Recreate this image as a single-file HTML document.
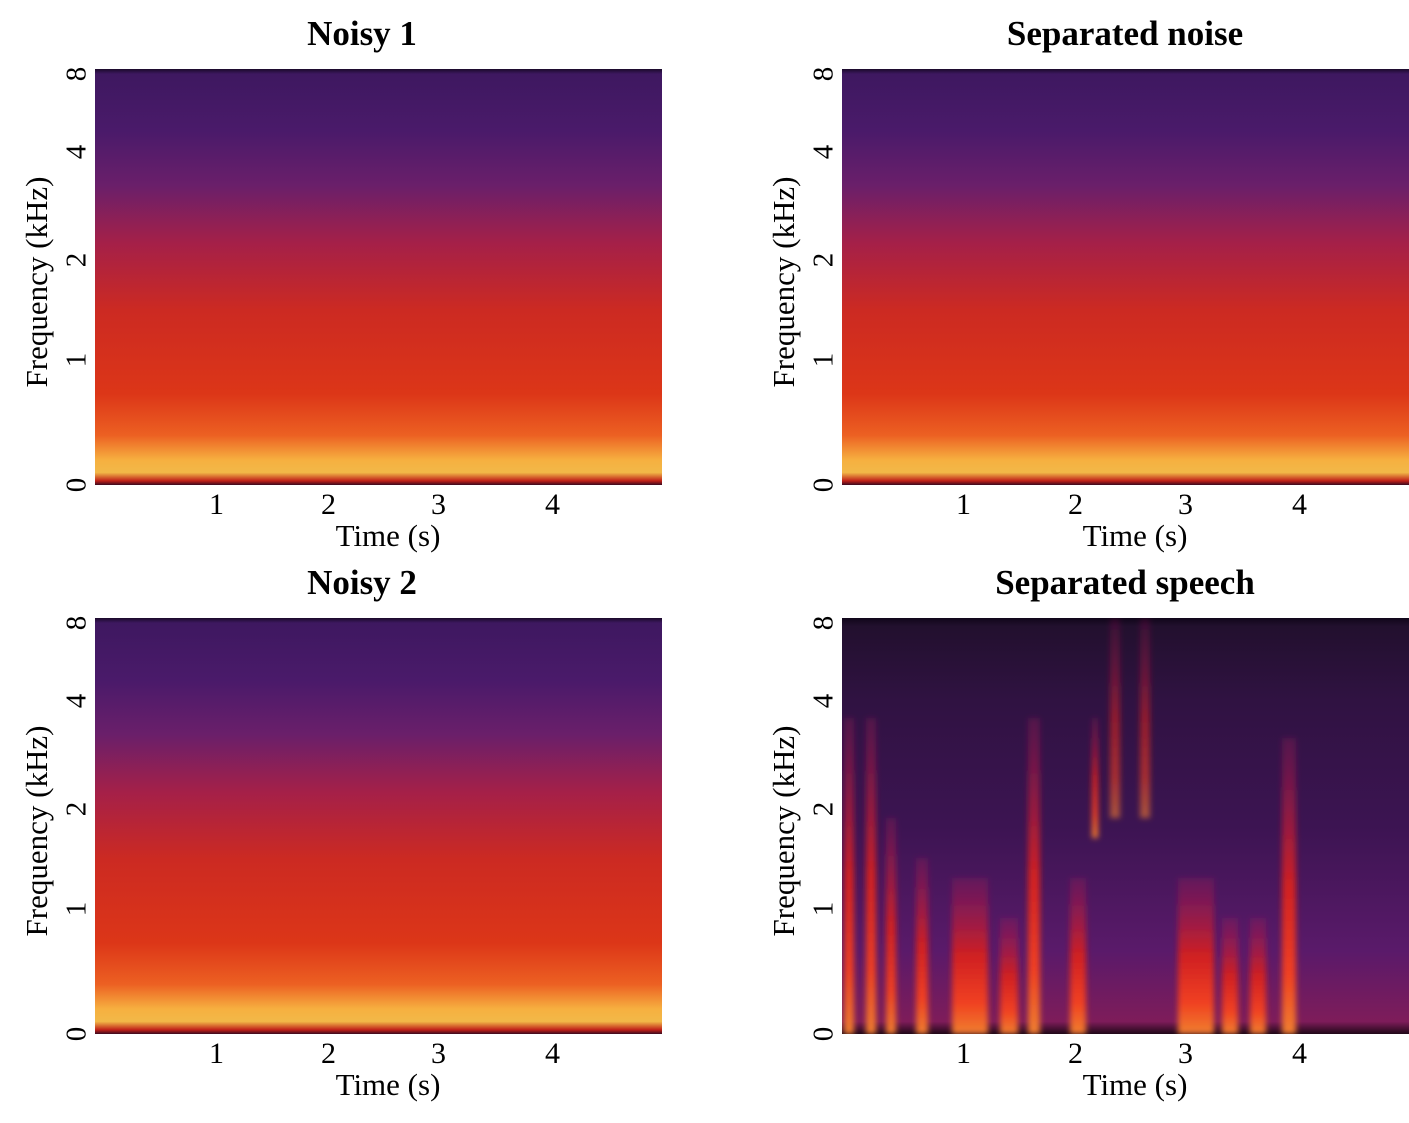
<!DOCTYPE html>
<html><head><meta charset="utf-8"><style>
body{margin:0;width:1409px;height:1123px;background:#fff;position:relative;overflow:hidden;font-family:"Liberation Serif",serif;color:#000}
.t{position:absolute;font-weight:bold;font-size:35px;transform:translateX(-50%);white-space:nowrap}
.l{position:absolute;font-size:30px;white-space:nowrap}
.c{position:absolute;font-size:31px;white-space:nowrap;transform:translateX(-50%)}
.r{position:absolute;font-size:31px;white-space:nowrap;transform:translate(-50%,-50%) rotate(-90deg)}
.n{position:absolute;font-size:29px;white-space:nowrap;transform:translate(-50%,-50%) rotate(-90deg)}
svg{position:absolute}
</style></head><body>
<svg width="0" height="0"><defs>
<linearGradient id="gn" x1="0" y1="0" x2="0" y2="1">
<stop offset="0" stop-color="#1a0a2a"/><stop offset="0.012" stop-color="#3e1860"/><stop offset="0.15" stop-color="#4a1a6a"/><stop offset="0.28" stop-color="#6a1f6a"/><stop offset="0.42" stop-color="#a52048"/><stop offset="0.58" stop-color="#cc2a22"/><stop offset="0.78" stop-color="#dc3618"/><stop offset="0.88" stop-color="#ec6022"/><stop offset="0.94" stop-color="#f6b040"/><stop offset="0.97" stop-color="#f2b848"/><stop offset="0.99" stop-color="#c02018"/><stop offset="1" stop-color="#3a0a20"/>
</linearGradient>
<linearGradient id="gs" x1="0" y1="0" x2="0" y2="1">
<stop offset="0" stop-color="#10061a"/><stop offset="0.02" stop-color="#22102e"/><stop offset="0.2" stop-color="#301242"/><stop offset="0.5" stop-color="#3c1452"/><stop offset="0.8" stop-color="#5a1a6a"/><stop offset="0.97" stop-color="#7e1c5a"/><stop offset="1" stop-color="#200818"/>
</linearGradient>
<linearGradient id="st" x1="0" y1="0" x2="0" y2="1">
<stop offset="0" stop-color="#a01858" stop-opacity="0.3"/><stop offset="0.5" stop-color="#d02020"/><stop offset="0.8" stop-color="#f04020"/><stop offset="1" stop-color="#f08030"/>
</linearGradient>
<filter id="bl"><feGaussianBlur stdDeviation="3"/></filter>
</defs></svg>

<div class="t" style="left:362px;top:14px">Noisy 1</div>
<div class="t" style="left:1125px;top:14px">Separated noise</div>
<div class="t" style="left:362px;top:563px">Noisy 2</div>
<div class="t" style="left:1125px;top:563px">Separated speech</div>

<svg style="left:95px;top:69px" width="567" height="416"><rect width="567" height="416" fill="url(#gn)"/></svg>
<svg style="left:842px;top:69px" width="567" height="416"><rect width="567" height="416" fill="url(#gn)"/></svg>
<svg style="left:95px;top:618px" width="567" height="416"><rect width="567" height="416" fill="url(#gn)"/></svg>
<svg style="left:842px;top:618px" width="567" height="416"><rect width="567" height="416" fill="url(#gs)"/>
<g filter="url(#bl)">
<rect x="2" y="100" width="10" height="316" fill="url(#st)"/>
<rect x="24" y="100" width="10" height="316" fill="url(#st)"/>
<rect x="44" y="200" width="10" height="216" fill="url(#st)"/>
<rect x="74" y="240" width="12" height="176" fill="url(#st)"/>
<rect x="110" y="260" width="36" height="156" fill="url(#st)"/>
<rect x="158" y="300" width="18" height="116" fill="url(#st)"/>
<rect x="186" y="100" width="12" height="316" fill="url(#st)"/>
<rect x="228" y="260" width="16" height="156" fill="url(#st)"/>
<rect x="250" y="100" width="6" height="120" fill="url(#st)"/>
<rect x="268" y="0" width="10" height="200" fill="url(#st)" opacity="0.6"/>
<rect x="298" y="0" width="10" height="200" fill="url(#st)" opacity="0.6"/>
<rect x="336" y="260" width="36" height="156" fill="url(#st)"/>
<rect x="380" y="300" width="16" height="116" fill="url(#st)"/>
<rect x="408" y="300" width="16" height="116" fill="url(#st)"/>
<rect x="440" y="120" width="14" height="296" fill="url(#st)"/>
</g></svg>

<div class="r" style="left:37px;top:282px">Frequency (kHz)</div>
<div class="r" style="left:784px;top:282px">Frequency (kHz)</div>
<div class="r" style="left:37px;top:831px">Frequency (kHz)</div>
<div class="r" style="left:784px;top:831px">Frequency (kHz)</div>

<div class="n" style="left:77px;top:74px">8</div><div class="n" style="left:77px;top:152px">4</div><div class="n" style="left:77px;top:260px">2</div><div class="n" style="left:77px;top:360px">1</div><div class="n" style="left:77px;top:485px">0</div>
<div class="n" style="left:824px;top:74px">8</div><div class="n" style="left:824px;top:152px">4</div><div class="n" style="left:824px;top:260px">2</div><div class="n" style="left:824px;top:360px">1</div><div class="n" style="left:824px;top:485px">0</div>
<div class="n" style="left:77px;top:623px">8</div><div class="n" style="left:77px;top:701px">4</div><div class="n" style="left:77px;top:809px">2</div><div class="n" style="left:77px;top:909px">1</div><div class="n" style="left:77px;top:1034px">0</div>
<div class="n" style="left:824px;top:623px">8</div><div class="n" style="left:824px;top:701px">4</div><div class="n" style="left:824px;top:809px">2</div><div class="n" style="left:824px;top:909px">1</div><div class="n" style="left:824px;top:1034px">0</div>

<div class="l" style="left:209px;top:488px">1</div><div class="l" style="left:321px;top:488px">2</div><div class="l" style="left:431px;top:488px">3</div><div class="l" style="left:545px;top:488px">4</div>
<div class="l" style="left:956px;top:488px">1</div><div class="l" style="left:1068px;top:488px">2</div><div class="l" style="left:1178px;top:488px">3</div><div class="l" style="left:1292px;top:488px">4</div>
<div class="l" style="left:209px;top:1037px">1</div><div class="l" style="left:321px;top:1037px">2</div><div class="l" style="left:431px;top:1037px">3</div><div class="l" style="left:545px;top:1037px">4</div>
<div class="l" style="left:956px;top:1037px">1</div><div class="l" style="left:1068px;top:1037px">2</div><div class="l" style="left:1178px;top:1037px">3</div><div class="l" style="left:1292px;top:1037px">4</div>

<div class="c" style="left:388px;top:518px">Time (s)</div>
<div class="c" style="left:1135px;top:518px">Time (s)</div>
<div class="c" style="left:388px;top:1067px">Time (s)</div>
<div class="c" style="left:1135px;top:1067px">Time (s)</div>
</body></html>
